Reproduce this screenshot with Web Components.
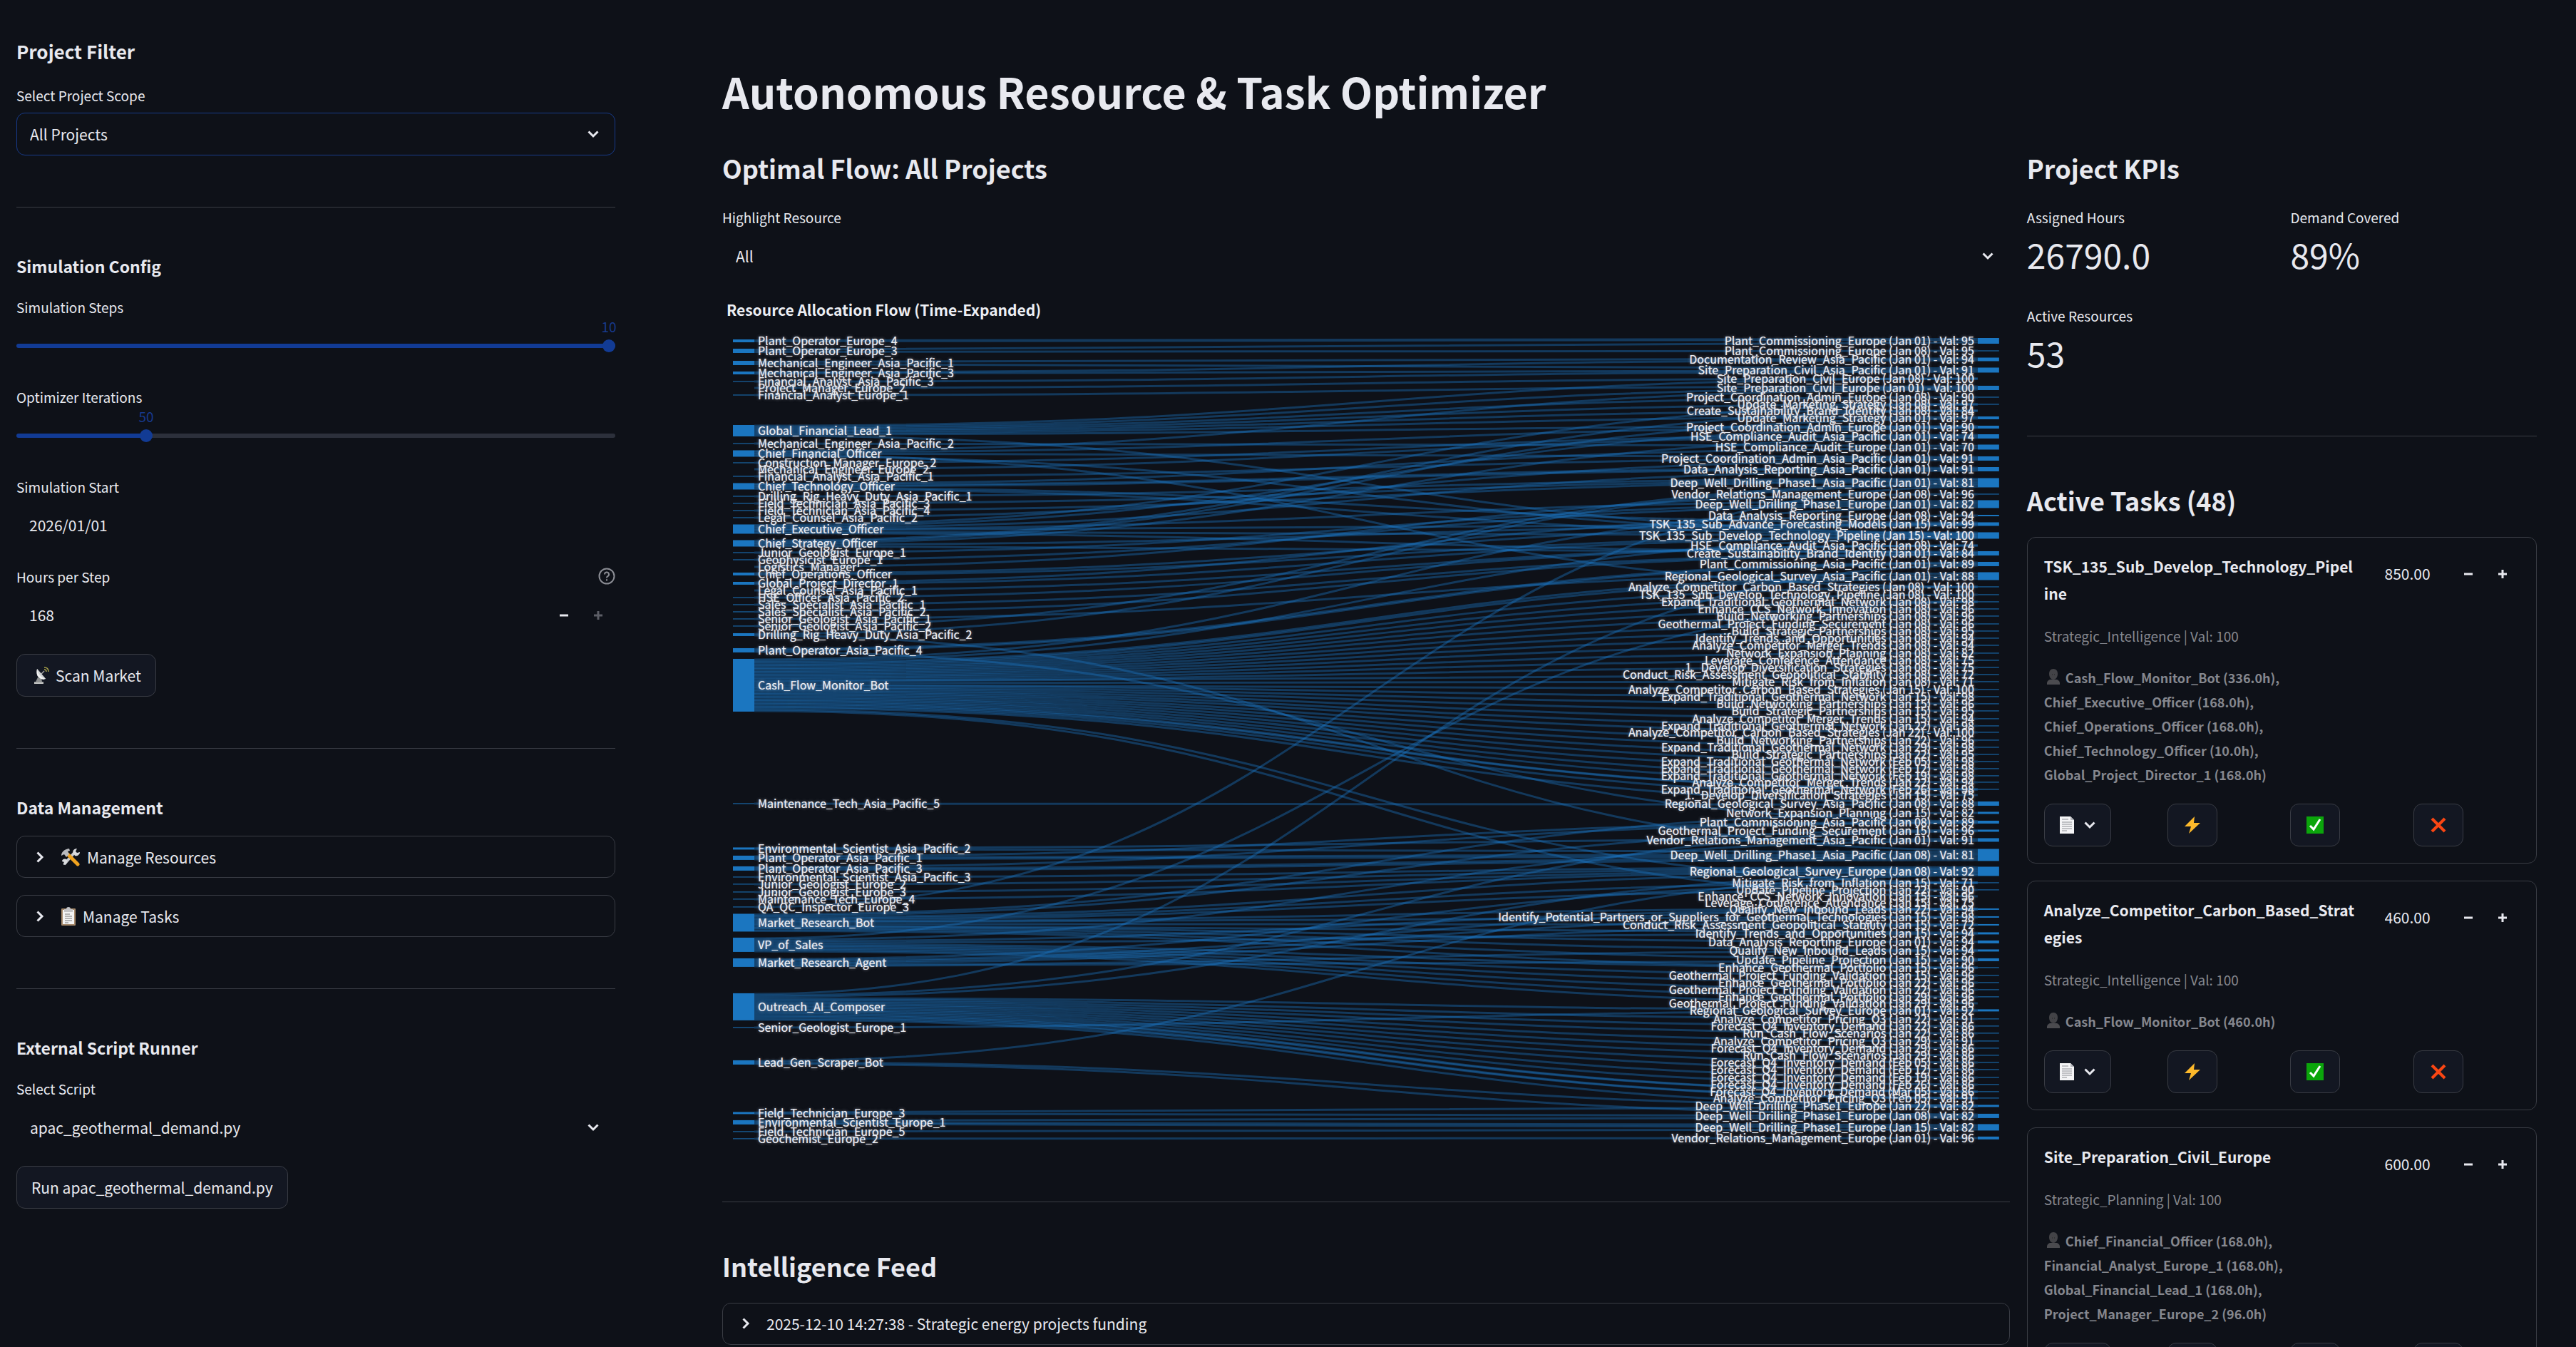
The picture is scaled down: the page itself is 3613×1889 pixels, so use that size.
<!DOCTYPE html>
<html lang="en">
<head>
<meta charset="utf-8">
<title>Autonomous Resource &amp; Task Optimizer</title>
<style>
  :root {
    --bg: #0e1118;
    --panel: #131722;
    --text: #e8e9ef;
    --muted: #85878e;
    --line: #393c44;
    --accent: #123b94;
    --track: #2c303b;
  }
  body {
    margin: 0;
    background: var(--bg);
    color: var(--text);
    font-family: "Noto Sans CJK SC", "Noto Sans", sans-serif;
    font-size: 21px;
  }
</style>
</head>
<body>

<app-shell>
  <section-heading slot="sidebar" size="large">Project Filter</section-heading>
  <select-field slot="sidebar" label="Select Project Scope" value="All Projects" focused></select-field>
  <rule-line slot="sidebar"></rule-line>
  <section-heading slot="sidebar" size="small">Simulation Config</section-heading>
  <range-field slot="sidebar" label="Simulation Steps" min="1" max="10" value="10"></range-field>
  <range-field slot="sidebar" label="Optimizer Iterations" min="10" max="200" value="50"></range-field>
  <date-field slot="sidebar" label="Simulation Start" value="2026/01/01"></date-field>
  <number-field slot="sidebar" label="Hours per Step" value="168" max="168" help></number-field>
  <push-button slot="sidebar"><app-icon name="dish"></app-icon>Scan Market</push-button>
  <rule-line slot="sidebar"></rule-line>
  <section-heading slot="sidebar" size="small">Data Management</section-heading>
  <fold-row slot="sidebar"><app-icon name="tools"></app-icon>Manage Resources</fold-row>
  <fold-row slot="sidebar"><app-icon name="clipboard"></app-icon>Manage Tasks</fold-row>
  <rule-line slot="sidebar"></rule-line>
  <section-heading slot="sidebar" size="small">External Script Runner</section-heading>
  <select-field slot="sidebar" label="Select Script" value="apac_geothermal_demand.py"></select-field>
  <push-button slot="sidebar">Run apac_geothermal_demand.py</push-button>

  <span slot="title">Autonomous Resource &amp; Task Optimizer</span>

  <section-heading slot="flow">Optimal Flow: All Projects</section-heading>
  <select-field slot="flow" label="Highlight Resource" value="All"></select-field>
  <flow-chart slot="flow" heading="Resource Allocation Flow (Time-Expanded)"></flow-chart>
  <rule-line slot="flow"></rule-line>
  <section-heading slot="flow">Intelligence Feed</section-heading>
  <fold-row slot="flow">2025-12-10 14:27:38 - Strategic energy projects funding</fold-row>

  <section-heading slot="tasks">Project KPIs</section-heading>
  <metric-grid slot="tasks">
    <metric-tile label="Assigned Hours">26790.0</metric-tile>
    <metric-tile label="Demand Covered">89%</metric-tile>
    <metric-tile label="Active Resources">53</metric-tile>
  </metric-grid>
  <rule-line slot="tasks"></rule-line>
  <section-heading slot="tasks">Active Tasks (48)</section-heading>
  <task-card slot="tasks" name="TSK_135_Sub_Develop_Technology_Pipeline" hours="850.00" meta="Strategic_Intelligence | Val: 100">Cash_Flow_Monitor_Bot (336.0h), Chief_Executive_Officer (168.0h), Chief_Operations_Officer (168.0h), Chief_Technology_Officer (10.0h), Global_Project_Director_1 (168.0h)</task-card>
  <task-card slot="tasks" name="Analyze_Competitor_Carbon_Based_Strategies" hours="460.00" meta="Strategic_Intelligence | Val: 100">Cash_Flow_Monitor_Bot (460.0h)</task-card>
  <task-card slot="tasks" name="Site_Preparation_Civil_Europe" hours="600.00" meta="Strategic_Planning | Val: 100">Chief_Financial_Officer (168.0h), Financial_Analyst_Europe_1 (168.0h), Global_Financial_Lead_1 (168.0h), Project_Manager_Europe_2 (96.0h)</task-card>
</app-shell>

<script>
const ICONS = {
  down: '<svg width="18" height="12" viewBox="0 0 18 12"><path d="M2.5 2.5 9 9l6.500-6.500" fill="none" stroke="#e8e9ef" stroke-width="3"/></svg>',
  right: '<svg width="12" height="18" viewBox="0 0 12 18"><path d="M2.500 2.500 9 9l-6.500 6.500" fill="none" stroke="#e8e9ef" stroke-width="3"/></svg>',
  help: '<svg width="24" height="24" viewBox="0 0 24 24" fill="none" stroke="#8b8d94" stroke-width="2"><circle cx="12" cy="12" r="10.500"/><path d="M9 9.500a3 3 0 1 1 4.300 2.700c-1 .5-1.300 1-1.300 2.300M12 16.300v2.200"/></svg>',
  dish: '<svg width="26" height="26" viewBox="0 0 26 26"><path d="M4 25v-3h2l3-6 5 1 1 5h2v3z" fill="#8d8f90"/><path d="M4 23h13v2H4z" fill="#c3c5c4"/><path d="M8 4c-2 6 0 14 9 15l3-1z" fill="#f1f2f2"/><path d="M8 4l12 14c-5-1-11-6-12-14z" fill="#cfd2d3"/><path d="M14 11l4-4" stroke="#aaa" stroke-width="1.500"/><path d="M18 5c2 0 3 1 3 3M18 2c4 0 6 2 6 6" fill="none" stroke="#a8a24a" stroke-width="1.500"/></svg>',
  tools: '<svg width="28" height="26" viewBox="0 0 28 26"><path d="M5 23 20 6" stroke="#c9cbce" stroke-width="4"/><path d="M18 8c-2-4 1-7 5-7l-2 4 2 2 4-1c0 4-4 6-7 5z" fill="#d9dbde"/><path d="M9 17c1 4-1 7-5 7l1-4-3-1c0-3 4-5 7-2z" fill="#d9dbde"/><path d="M10 9l14 14" stroke="#f0a31f" stroke-width="5" stroke-linecap="round"/><path d="M1 11c0-5 4-9 11-10l1 3-3 1 2 4-4 4-3-4z" fill="#b9bbbf"/></svg>',
  clipboard: '<svg width="22" height="26" viewBox="0 0 22 26"><rect x="1" y="2" width="20" height="24" rx="1" fill="#a78a6b"/><rect x="3" y="4" width="16" height="20" fill="#f3f3f3"/><path d="M5 3h3a3 3 0 0 1 6 0h3v4H5z" fill="#c4c4c6"/><path d="M6 10h7M6 13h10M6 16h10M6 19h10M6 22h5" stroke="#777" stroke-width="1.200"/></svg>',
  page: '<svg width="22" height="26" viewBox="0 0 22 26"><path d="M1 1h15l5 5v19H1z" fill="#f4f4f6"/><path d="M16 1v5h5z" fill="#b6b8bd"/><path d="M4 5h9M4 9h14M4 12h14M4 15h14M4 18h14M4 21h7" stroke="#8b8d93" stroke-width="1.200"/></svg>',
  bolt: '<svg width="24" height="26" viewBox="0 0 24 26"><path d="M15 1 1 15h9L7 25 23 10h-9z" fill="#fdb92b"/></svg>',
  check: '<svg width="26" height="26" viewBox="0 0 26 26"><rect x="1" y="1" width="24" height="24" fill="#0ba50b"/><path d="M6 14l5 5 9-14" fill="none" stroke="#fff" stroke-width="3"/></svg>',
  cross: '<svg width="24" height="24" viewBox="0 0 24 24"><path d="M3 3l18 18M21 3 3 21" stroke="#fa4613" stroke-width="4"/></svg>',
  person: '<svg width="22" height="22" viewBox="0 0 22 22"><path d="M2 22v-2c0-3 3-5 5-5h8c2 0 5 2 5 5v2z" fill="#4b4b4f"/><path d="M11 0c4 0 6 3 6 7 0 5-3 8-6 8s-6-3-6-8c0-4 2-7 6-7z" fill="#434347"/><path d="M9 8h1M12 8h1" stroke="#222" stroke-width="1"/></svg>',
  minus: '<svg width="14" height="14" viewBox="0 0 14 14"><path d="M1 7h12" stroke="currentColor" stroke-width="3"/></svg>',
  plus: '<svg width="14" height="14" viewBox="0 0 14 14"><path d="M1 7h12M7 1v12" stroke="currentColor" stroke-width="3"/></svg>'
};

const FIELD = `
  :host { display: block; }
  * { box-sizing: border-box; }
  label { display: flex; align-items: center; justify-content: space-between; height: 36px; margin-bottom: 6px; padding-bottom: 2px; font-size: 19px; }
  input, select, button { font: inherit; color: inherit; margin: 0; }
  input:focus, select:focus { outline: none; }
`;

class AppShell extends HTMLElement {
  constructor() {
    super();
    this.attachShadow({ mode: 'open' }).innerHTML = `
      <style>
        :host { display: grid; grid-template-columns: 886px minmax(0, 1fr); height: 100vh; overflow: hidden; }
        aside, main { overflow-y: auto; scrollbar-width: none; }
        aside { display: flex; flex-direction: column; gap: 24px; padding: 62px 23px 24px; }
        main { padding: 98px 55px 24px 127px; }
        h1 { margin: 0 0 60px; font-size: 59px; line-height: 60px; font-weight: 700; }
        .columns { display: flex; gap: 24px; align-items: flex-start; }
        .flow, .tasks { display: flex; flex-direction: column; gap: 24px; min-width: 0; }
        .flow { flex: 1 1 calc(500% / 7 - 12px); }
        .tasks { flex: 1 1 calc(200% / 7 - 12px); }
      </style>
      <aside><slot name="sidebar"></slot></aside>
      <main>
        <h1><slot name="title"></slot></h1>
        <div class="columns">
          <div class="flow"><slot name="flow"></slot></div>
          <div class="tasks"><slot name="tasks"></slot></div>
        </div>
      </main>
    `;
  }
}

class AppIcon extends HTMLElement {
  connectedCallback() {
    if (this.shadowRoot) return;
    this.attachShadow({ mode: 'open' }).innerHTML = `
      <style>
        :host { display: inline-flex; flex: none; }
        svg { display: block; }
      </style>
      ${ICONS[this.getAttribute('name')]}
    `;
  }
}

class SectionHeading extends HTMLElement {
  constructor() {
    super();
    this.attachShadow({ mode: 'open' }).innerHTML = `
      <style>
        :host { display: block; padding-bottom: 10px; }
        h2 { margin: 0; font-size: 36px; line-height: 35px; font-weight: 600; }
        :host([size="large"]) h2 { font-size: 26px; line-height: 20px; }
        :host([size="small"]) { padding-bottom: 6px; }
        :host([size="small"]) h2 { font-size: 23px; line-height: 20px; }
      </style>
      <h2><slot></slot></h2>
    `;
  }
}

class RuleLine extends HTMLElement {
  constructor() {
    super();
    this.attachShadow({ mode: 'open' }).innerHTML = `
      <style>
        :host { display: block; margin: 48px 0; }
        hr { margin: 0; border: 0; height: 1px; background: var(--line); }
      </style>
      <hr>
    `;
  }
}

class SelectField extends HTMLElement {
  connectedCallback() {
    if (this.shadowRoot) return;
    this.attachShadow({ mode: 'open' }).innerHTML = `
      <style>
        ${FIELD}
        .box { display: grid; align-items: center; }
        select, svg { grid-area: 1 / 1; }
        svg { justify-self: end; margin-right: 22px; pointer-events: none; }
        select { width: 100%; height: 60px; padding: 0 48px 0 18px; appearance: none; background: none; border: 1px solid transparent; border-radius: 12px; }
        :host([focused]) select { border-color: #173a8a; }
      </style>
      <label for="field">${this.getAttribute('label')}</label>
      <div class="box">
        <select id="field"><option>${this.getAttribute('value')}</option></select>
        ${ICONS.down}
      </div>
    `;
  }
}

class RangeField extends HTMLElement {
  connectedCallback() {
    if (this.shadowRoot) return;
    this.attachShadow({ mode: 'open' }).innerHTML = `
      <style>
        ${FIELD}
        :host { padding-bottom: 21px; }
        label { margin-bottom: 0; }
        .value { position: relative; height: 20px; margin-bottom: 7px; }
        output { position: absolute; left: calc(9px + var(--part) * (100% - 18px)); transform: translateX(-50%); font-size: 19px; line-height: 18px; color: #17398c; }
        input { display: block; width: 100%; height: 18px; appearance: none; background: none; }
        input::-webkit-slider-runnable-track {
          height: 6px;
          border-radius: 3px;
          background: linear-gradient(to right, var(--accent) calc(var(--part) * 100%), var(--track) calc(var(--part) * 100%));
        }
        input::-webkit-slider-thumb { appearance: none; width: 18px; height: 18px; margin-top: -6px; border-radius: 50%; background: var(--accent); }
      </style>
      <label for="field">${this.getAttribute('label')}</label>
      <div class="value"><output for="field"></output></div>
      <input id="field" type="range" min="${this.getAttribute('min')}" max="${this.getAttribute('max')}" value="${this.getAttribute('value')}">
    `;
    this.input = this.shadowRoot.querySelector('input');
    this.input.addEventListener('input', this.update.bind(this));
    this.update();
  }

  update() {
    const { min, max, value } = this.input;
    this.style.setProperty('--part', (value - min) / (max - min));
    this.shadowRoot.querySelector('output').textContent = value;
  }
}

class DateField extends HTMLElement {
  connectedCallback() {
    if (this.shadowRoot) return;
    this.attachShadow({ mode: 'open' }).innerHTML = `
      <style>
        ${FIELD}
        input { display: block; width: 100%; height: 60px; padding: 0 18px 2px; border: 0; background: none; }
      </style>
      <label for="field">${this.getAttribute('label')}</label>
      <input id="field" type="text" value="${this.getAttribute('value')}">
    `;
  }
}

class NumberField extends HTMLElement {
  connectedCallback() {
    if (this.shadowRoot) return;
    const label = this.getAttribute('label');
    const value = this.getAttribute('value');
    const atMax = value === this.getAttribute('max');
    this.attachShadow({ mode: 'open' }).innerHTML = `
      <style>
        ${FIELD}
        .box { display: flex; height: 60px; }
        input { flex: 1; min-width: 0; padding: 0 0 2px 18px; border: 0; background: none; appearance: textfield; }
        input::-webkit-inner-spin-button { appearance: none; }
        button { display: grid; place-items: center; flex: none; width: 48px; padding: 0; border: 0; background: none; }
        button:disabled { color: #5c5e66; }
      </style>
      ${label ? `<label for="field">${label}${this.hasAttribute('help') ? ICONS.help : ''}</label>` : ''}
      <div class="box">
        <input id="field" type="number" step="any" value="${value}" ${label ? '' : 'aria-label="Hours"'}>
        <button type="button" aria-label="Decrease">${ICONS.minus}</button>
        <button type="button" aria-label="Increase" ${atMax ? 'disabled' : ''}>${ICONS.plus}</button>
      </div>
    `;
  }
}

class PushButton extends HTMLElement {
  constructor() {
    super();
    this.attachShadow({ mode: 'open' }).innerHTML = `
      <style>
        :host { display: flex; }
        button {
          display: flex;
          align-items: center;
          gap: 8px;
          height: 60px;
          padding: 0 20px;
          border: 1px solid var(--line);
          border-radius: 12px;
          background: var(--panel);
          color: inherit;
          font: inherit;
          cursor: pointer;
        }
        :host([compact]) button { min-width: 70px; justify-content: center; gap: 12px; }
      </style>
      <button type="button"><slot></slot></button>
    `;
  }
}

class FoldRow extends HTMLElement {
  constructor() {
    super();
    this.attachShadow({ mode: 'open' }).innerHTML = `
      <style>
        :host { display: block; }
        details { border: 1px solid var(--line); border-radius: 12px; }
        summary { display: flex; align-items: center; height: 57px; padding: 0 26px; list-style: none; cursor: pointer; }
        .title { display: flex; align-items: center; gap: 9px; padding-left: 23px; }
      </style>
      <details>
        <summary>${ICONS.right}<span class="title"><slot></slot></span></summary>
      </details>
    `;
  }
}

class MetricGrid extends HTMLElement {
  constructor() {
    super();
    this.attachShadow({ mode: 'open' }).innerHTML = `
      <style>
        :host { display: grid; grid-template-columns: 1fr 1fr; gap: 24px; }
      </style>
      <slot></slot>
    `;
  }
}

class MetricTile extends HTMLElement {
  connectedCallback() {
    if (this.shadowRoot) return;
    this.attachShadow({ mode: 'open' }).innerHTML = `
      <style>
        :host { display: block; padding-bottom: 12px; }
        .label { font-size: 19px; line-height: 36px; }
        .value { font-size: 48px; line-height: 66px; }
      </style>
      <div class="label">${this.getAttribute('label')}</div>
      <div class="value"><slot></slot></div>
    `;
  }
}

class TaskCard extends HTMLElement {
  connectedCallback() {
    if (this.shadowRoot) return;
    this.attachShadow({ mode: 'open' }).innerHTML = `
      <style>
        :host { display: block; padding: 21px 23px 23px; border: 1px solid var(--line); border-radius: 12px; }
        .top { display: grid; grid-template-columns: minmax(0, 21fr) minmax(0, 10fr); gap: 24px; align-items: start; }
        h3, p { margin: 0 0 24px; }
        h3 { font-size: 21px; line-height: 38px; font-weight: 600; overflow-wrap: anywhere; }
        p { font-size: 19px; line-height: 34px; color: var(--muted); }
        .people { font-size: 18px; font-weight: 600; }
        .people app-icon { margin: 0 6px 0 2px; vertical-align: -2px; }
        .actions { display: grid; grid-template-columns: repeat(4, 1fr); gap: 24px; }
      </style>
      <div class="top">
        <div>
          <h3>${this.getAttribute('name')}</h3>
          <p>${this.getAttribute('meta')}</p>
          <p class="people"><app-icon name="person"></app-icon><slot></slot></p>
        </div>
        <number-field value="${this.getAttribute('hours')}"></number-field>
      </div>
      <div class="actions">
        <push-button compact><app-icon name="page"></app-icon><app-icon name="down"></app-icon></push-button>
        <push-button compact><app-icon name="bolt"></app-icon></push-button>
        <push-button compact><app-icon name="check"></app-icon></push-button>
        <push-button compact><app-icon name="cross"></app-icon></push-button>
      </div>
    `;
  }
}

// name, centre y, bar height, indexes of the tasks it feeds
const RESOURCES = [
  ['Plant_Operator_Europe_4', 65, 4, [0]],
  ['Plant_Operator_Europe_3', 79, 6, [0, 1]],
  ['Mechanical_Engineer_Asia_Pacific_1', 96, 6, [2, 3]],
  ['Mechanical_Engineer_Asia_Pacific_3', 110, 4, [2, 3]],
  ['Financial_Analyst_Asia_Pacific_3', 122, 1, [3]],
  ['Project_Manager_Europe_2', 131, 0, [4]],
  ['Financial_Analyst_Europe_1', 141, 1, [5]],
  ['Global_Financial_Lead_1', 191, 16, [4, 5, 6, 7, 8, 9, 10, 20]],
  ['Mechanical_Engineer_Asia_Pacific_2', 209, 1, [12]],
  ['Chief_Financial_Officer', 223, 9, [5, 10, 13, 25, 20]],
  ['Construction_Manager_Europe_2', 236, 1, [11]],
  ['Mechanical_Engineer_Europe_2', 245, 0, [11]],
  ['Financial_Analyst_Asia_Pacific_1', 255, 1, [13]],
  ['Chief_Technology_Officer', 269, 9, [12, 14, 14, 19, 20]],
  ['Drilling_Rig_Heavy_Duty_Asia_Pacific_1', 283, 1, [15]],
  ['Field_Technician_Asia_Pacific_3', 293, 1, [15]],
  ['Field_Technician_Asia_Pacific_4', 303, 1, [15]],
  ['Legal_Counsel_Asia_Pacific_2', 313, 1, [13]],
  ['Chief_Executive_Officer', 329, 13, [7, 10, 14, 17, 19, 20, 22]],
  ['Chief_Strategy_Officer', 349, 9, [8, 9, 11, 19, 22]],
  ['Junior_Geologist_Europe_1', 362, 1, [17]],
  ['Geophysicist_Europe_1', 372, 1, [17]],
  ['Logistics_Manager', 382, 0, [16]],
  ['Chief_Operations_Officer', 392, 4, [19, 20]],
  ['Global_Project_Director_1', 405, 4, [18, 20]],
  ['Legal_Counsel_Asia_Pacific_1', 415, 0, [21]],
  ['HSE_Officer_Asia_Pacific_2', 425, 1, [21]],
  ['Sales_Specialist_Asia_Pacific_1', 435, 1, [22]],
  ['Sales_Specialist_Asia_Pacific_2', 445, 1, [22]],
  ['Senior_Geologist_Asia_Pacific_1', 455, 1, [24]],
  ['Senior_Geologist_Asia_Pacific_2', 465, 1, [15]],
  ['Drilling_Rig_Heavy_Duty_Asia_Pacific_2', 477, 4, [15, 60]],
  ['Plant_Operator_Asia_Pacific_4', 499, 6, [23, 23, 57]],
  ['Cash_Flow_Monitor_Bot', 548, 74, [17, 20, 24, 24, 25, 26, 27, 28, 29, 30, 31, 32, 33, 34, 35, 36, 37, 38, 39, 40, 41, 42, 43, 44, 45, 46, 47, 48, 49, 50, 51, 52, 53, 53, 54, 55, 62, 64]],
  ['Maintenance_Tech_Asia_Pacific_5', 714, 1, [55]],
  ['Environmental_Scientist_Asia_Pacific_2', 777, 3, [59, 60]],
  ['Plant_Operator_Asia_Pacific_1', 790, 6, [57, 60, 60]],
  ['Plant_Operator_Asia_Pacific_3', 805, 6, [57, 60, 60]],
  ['Environmental_Scientist_Asia_Pacific_3', 817, 1, [61]],
  ['Junior_Geologist_Europe_2', 827, 1, [61]],
  ['Junior_Geologist_Europe_3', 838, 1, [61]],
  ['Maintenance_Tech_Europe_4', 848, 1, [61]],
  ['QA_QC_Inspector_Europe_3', 859, 1, [15]],
  ['Market_Research_Bot', 881, 25, [56, 58, 61, 62, 63, 66, 67, 68, 69, 70, 71, 72, 73]],
  ['VP_of_Sales', 912, 20, [27, 59, 66, 69, 73, 74, 75, 76, 77, 78]],
  ['Market_Research_Agent', 937, 12, [62, 66, 67, 68, 71, 72]],
  ['Outreach_AI_Composer', 999, 38, [23, 58, 61, 79, 80, 81, 82, 83, 84, 85, 86, 87, 88, 89, 90, 90, 91, 91, 92]],
  ['Senior_Geologist_Europe_1', 1028, 1, [79]],
  ['Lead_Gen_Scraper_Bot', 1077, 6, [61, 92, 93]],
  ['Field_Technician_Europe_3', 1148, 3, [92, 93]],
  ['Environmental_Scientist_Europe_1', 1161, 6, [93, 94, 94]],
  ['Field_Technician_Europe_5', 1174, 1, [94]],
  ['Geochemist_Europe_2', 1184, 1, [95]]
];

// label, centre y, bar height
const TASKS = [
  ['Plant_Commissioning_Europe (Jan 01) - Val: 95', 65, 8],
  ['Plant_Commissioning_Europe (Jan 08) - Val: 95', 79, 1],
  ['Documentation_Review_Asia_Pacific (Jan 01) - Val: 94', 91, 5],
  ['Site_Preparation_Civil_Asia_Pacific (Jan 01) - Val: 91', 106, 7],
  ['Site_Preparation_Civil_Europe (Jan 08) - Val: 100', 118, 0],
  ['Site_Preparation_Civil_Europe (Jan 01) - Val: 100', 131, 6],
  ['Project_Coordination_Admin_Europe (Jan 08) - Val: 90', 144, 1],
  ['Update_Marketing_Strategy (Jan 08) - Val: 97', 154, 1],
  ['Create_Sustainability_Brand_Identity (Jan 08) - Val: 84', 163, 0],
  ['Update_Marketing_Strategy (Jan 01) - Val: 97', 173, 4],
  ['Project_Coordination_Admin_Europe (Jan 01) - Val: 90', 186, 4],
  ['HSE_Compliance_Audit_Asia_Pacific (Jan 01) - Val: 74', 199, 6],
  ['HSE_Compliance_Audit_Europe (Jan 01) - Val: 70', 214, 7],
  ['Project_Coordination_Admin_Asia_Pacific (Jan 01) - Val: 91', 230, 6],
  ['Data_Analysis_Reporting_Asia_Pacific (Jan 01) - Val: 91', 245, 6],
  ['Deep_Well_Drilling_Phase1_Asia_Pacific (Jan 01) - Val: 81', 264, 13],
  ['Vendor_Relations_Management_Europe (Jan 08) - Val: 96', 280, 1],
  ['Deep_Well_Drilling_Phase1_Europe (Jan 01) - Val: 82', 294, 11],
  ['Data_Analysis_Reporting_Europe (Jan 08) - Val: 94', 310, 2],
  ['TSK_135_Sub_Advance_Forecasting_Models (Jan 15) - Val: 99', 322, 5],
  ['TSK_135_Sub_Develop_Technology_Pipeline (Jan 15) - Val: 100', 338, 9],
  ['HSE_Compliance_Audit_Asia_Pacific (Jan 08) - Val: 74', 352, 0],
  ['Create_Sustainability_Brand_Identity (Jan 01) - Val: 84', 363, 6],
  ['Plant_Commissioning_Asia_Pacific (Jan 01) - Val: 89', 378, 6],
  ['Regional_Geological_Survey_Asia_Pacific (Jan 01) - Val: 88', 395, 11],
  ['Analyze_Competitor_Carbon_Based_Strategies (Jan 08) - Val: 100', 410, 1],
  ['TSK_135_Sub_Develop_Technology_Pipeline (Jan 08) - Val: 100', 421, 1],
  ['Expand_Traditional_Geothermal_Network (Jan 08) - Val: 98', 431, 1],
  ['Enhance_CCS_Network_Innovation (Jan 08) - Val: 96', 441, 1],
  ['Build_Networking_Partnerships (Jan 08) - Val: 96', 451, 1],
  ['Geothermal_Project_Funding_Securement (Jan 08) - Val: 96', 462, 1],
  ['Build_Strategic_Partnerships (Jan 08) - Val: 95', 472, 1],
  ['Identify_Trends_and_Opportunities (Jan 08) - Val: 94', 482, 1],
  ['Analyze_Competitor_Merger_Trends (Jan 08) - Val: 94', 492, 1],
  ['Network_Expansion_Planning (Jan 08) - Val: 82', 503, 1],
  ['Leverage_Conference_Attendance (Jan 08) - Val: 75', 513, 1],
  ['1._Develop_Diversification_Strategies (Jan 08) - Val: 75', 523, 1],
  ['Conduct_Risk_Assessment_Geopolitical_Stability (Jan 08) - Val: 72', 533, 1],
  ['Mitigate_Risk_from_Inflation (Jan 08) - Val: 71', 543, 1],
  ['Analyze_Competitor_Carbon_Based_Strategies (Jan 15) - Val: 100', 554, 1],
  ['Expand_Traditional_Geothermal_Network (Jan 15) - Val: 98', 564, 1],
  ['Build_Networking_Partnerships (Jan 15) - Val: 96', 574, 1],
  ['Build_Strategic_Partnerships (Jan 15) - Val: 95', 584, 1],
  ['Analyze_Competitor_Merger_Trends (Jan 15) - Val: 94', 595, 1],
  ['Expand_Traditional_Geothermal_Network (Jan 22) - Val: 98', 605, 1],
  ['Analyze_Competitor_Carbon_Based_Strategies (Jan 22) - Val: 100', 614, 1],
  ['Build_Networking_Partnerships (Jan 22) - Val: 96', 625, 1],
  ['Expand_Traditional_Geothermal_Network (Jan 29) - Val: 98', 635, 1],
  ['Build_Strategic_Partnerships (Jan 22) - Val: 95', 645, 1],
  ['Expand_Traditional_Geothermal_Network (Feb 05) - Val: 98', 655, 1],
  ['Expand_Traditional_Geothermal_Network (Feb 12) - Val: 98', 665, 1],
  ['Expand_Traditional_Geothermal_Network (Feb 19) - Val: 98', 675, 1],
  ['Analyze_Competitor_Merger_Trends (Jan 22) - Val: 94', 684, 1],
  ['Expand_Traditional_Geothermal_Network (Feb 26) - Val: 98', 694, 1],
  ['1._Develop_Diversification_Strategies (Jan 15) - Val: 75', 702, 0],
  ['Regional_Geological_Survey_Asia_Pacific (Jan 08) - Val: 88', 714, 6],
  ['Network_Expansion_Planning (Jan 15) - Val: 82', 727, 3],
  ['Plant_Commissioning_Asia_Pacific (Jan 08) - Val: 89', 740, 4],
  ['Geothermal_Project_Funding_Securement (Jan 15) - Val: 96', 752, 3],
  ['Vendor_Relations_Management_Asia_Pacific (Jan 01) - Val: 91', 765, 5],
  ['Deep_Well_Drilling_Phase1_Asia_Pacific (Jan 08) - Val: 81', 786, 17],
  ['Regional_Geological_Survey_Europe (Jan 08) - Val: 92', 809, 13],
  ['Mitigate_Risk_from_Inflation (Jan 15) - Val: 71', 825, 1],
  ['Update_Pipeline_Projection (Jan 22) - Val: 90', 835, 1],
  ['Enhance_CCS_Network_Innovation (Jan 15) - Val: 96', 844, 0],
  ['Leverage_Conference_Attendance (Jan 15) - Val: 75', 853, 0],
  ['Qualify_New_Inbound_Leads (Jan 22) - Val: 94', 862, 2],
  ['Identify_Potential_Partners_or_Suppliers_for_Geothermal_Technologies (Jan 15) - Val: 98', 873, 2],
  ['Conduct_Risk_Assessment_Geopolitical_Stability (Jan 15) - Val: 72', 884, 2],
  ['Identify_Trends_and_Opportunities (Jan 15) - Val: 94', 896, 3],
  ['Data_Analysis_Reporting_Europe (Jan 01) - Val: 94', 908, 4],
  ['Qualify_New_Inbound_Leads (Jan 15) - Val: 94', 920, 3],
  ['Update_Pipeline_Projection (Jan 15) - Val: 90', 933, 4],
  ['Enhance_Geothermal_Portfolio (Jan 15) - Val: 96', 944, 1],
  ['Geothermal_Project_Funding_Validation (Jan 15) - Val: 96', 955, 1],
  ['Enhance_Geothermal_Portfolio (Jan 22) - Val: 96', 965, 1],
  ['Geothermal_Project_Funding_Validation (Jan 22) - Val: 96', 975, 1],
  ['Enhance_Geothermal_Portfolio (Jan 29) - Val: 96', 985, 1],
  ['Geothermal_Project_Funding_Validation (Jan 29) - Val: 96', 994, 0],
  ['Regional_Geological_Survey_Europe (Jan 01) - Val: 92', 1004, 3],
  ['Analyze_Competitor_Pricing_Q3 (Jan 22) - Val: 91', 1016, 1],
  ['Forecast_Q4_Inventory_Demand (Jan 22) - Val: 86', 1026, 1],
  ['Run_Cash_Flow_Scenarios (Jan 22) - Val: 86', 1036, 1],
  ['Analyze_Competitor_Pricing_Q3 (Jan 29) - Val: 91', 1047, 1],
  ['Forecast_Q4_Inventory_Demand (Jan 29) - Val: 86', 1057, 1],
  ['Run_Cash_Flow_Scenarios (Jan 29) - Val: 86', 1067, 1],
  ['Forecast_Q4_Inventory_Demand (Feb 05) - Val: 86', 1077, 1],
  ['Forecast_Q4_Inventory_Demand (Feb 12) - Val: 86', 1087, 1],
  ['Forecast_Q4_Inventory_Demand (Feb 19) - Val: 86', 1098, 1],
  ['Forecast_Q4_Inventory_Demand (Feb 26) - Val: 86', 1108, 1],
  ['Forecast_Q4_Inventory_Demand (Mar 05) - Val: 86', 1118, 1],
  ['Analyze_Competitor_Pricing_Q3 (Feb 05) - Val: 91', 1127, 1],
  ['Deep_Well_Drilling_Phase1_Europe (Jan 22) - Val: 82', 1138, 3],
  ['Deep_Well_Drilling_Phase1_Europe (Jan 08) - Val: 82', 1152, 6],
  ['Deep_Well_Drilling_Phase1_Europe (Jan 15) - Val: 82', 1168, 9],
  ['Vendor_Relations_Management_Europe (Jan 01) - Val: 96', 1183, 4]
];

class FlowChart extends HTMLElement {
  connectedCallback() {
    if (this.shadowRoot) return;
    this.attachShadow({ mode: 'open' }).innerHTML = `
      <style>
        :host { display: block; }
        svg { display: block; width: 100%; }
        text { fill: #eceef3; font-size: 16px; text-shadow: 0 0 1px rgba(220, 222, 230, 0.6), 0 0 4px rgba(190, 193, 205, 0.6); }
        .heading { font-size: 21px; font-weight: 700; text-shadow: none; }
        .task { text-anchor: end; }
        path { fill: none; stroke: rgba(28, 118, 195, 0.4); }
        rect { fill: #1b76c0; }
      </style>
      <svg viewBox="0 0 1806 1200" role="img" aria-label="${this.getAttribute('heading')}">
        <text class="heading" x="6" y="30">${this.getAttribute('heading')}</text>
        ${this.links()}
        ${RESOURCES.map(([name, y, h]) => this.bar(15, y, h) + `<text x="50" y="${y + 6}">${name}</text>`).join('')}
        ${TASKS.map(([name, y, h]) => this.bar(1761, y, h) + `<text class="task" x="1756" y="${y + 6}">${name}</text>`).join('')}
      </svg>
    `;
  }

  bar(x, y, h) {
    return h ? `<rect x="${x}" y="${y - h / 2}" width="30" height="${h}"/>` : '';
  }

  links() {
    const all = [];
    RESOURCES.forEach(([, y, h, targets], source) => {
      targets.forEach((target, i) => {
        const step = h / targets.length;
        all.push({ source, target, y0: y - h / 2 + step * (i + 0.5), width: Math.min(4, Math.max(3, step)) });
      });
    });
    TASKS.forEach(([, y, h], index) => {
      const incoming = all.filter(link => link.target === index).sort((a, b) => a.y0 - b.y0);
      incoming.forEach((link, i) => {
        const step = h / incoming.length;
        link.y1 = y - h / 2 + step * (i + 0.5);
      });
    });
    return all.map(({ y0, y1, width }) => `<path d="M45 ${y0}C903 ${y0} 903 ${y1} 1761 ${y1}" stroke-width="${width}"/>`).join('');
  }
}

customElements.define('app-shell', AppShell);
customElements.define('app-icon', AppIcon);
customElements.define('section-heading', SectionHeading);
customElements.define('rule-line', RuleLine);
customElements.define('select-field', SelectField);
customElements.define('range-field', RangeField);
customElements.define('date-field', DateField);
customElements.define('number-field', NumberField);
customElements.define('push-button', PushButton);
customElements.define('fold-row', FoldRow);
customElements.define('metric-grid', MetricGrid);
customElements.define('metric-tile', MetricTile);
customElements.define('task-card', TaskCard);
customElements.define('flow-chart', FlowChart);
</script>
</body>
</html>
